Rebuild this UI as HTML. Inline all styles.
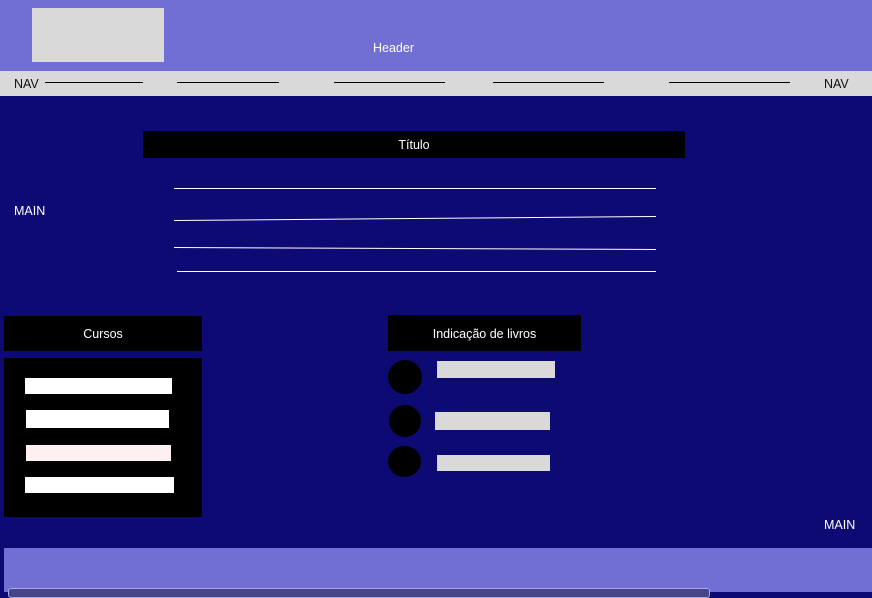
<!DOCTYPE html>
<html><head><meta charset="utf-8"><style>
*{margin:0;padding:0;box-sizing:border-box}
body{width:872px;height:592px;overflow:hidden;background:#0d0a74;font-family:"Liberation Sans",sans-serif;position:relative;font-size:12.5px}
div{position:absolute}
.w{color:#fff}
.ln{height:1px;background:#000}
.wl{height:1px;background:#fff}
.bk{background:#000;color:#fff;text-align:center}
.g{background:#d9d9d9}
.c{background:#000;border-radius:50%}
</style></head><body>
<div style="left:0;top:0;width:872px;height:71px;background:#716fd3"></div>
<div class="g" style="left:32px;top:8px;width:132px;height:54px"></div>
<div class="w" style="left:373px;top:41px">Header</div>
<div style="left:0;top:71px;width:872px;height:25px;background:#d9d9d9"></div>
<div style="left:14px;top:77px;color:#111">NAV</div>
<div style="left:824px;top:77px;color:#111">NAV</div>
<div class="ln" style="left:45px;top:82px;width:98px"></div>
<div class="ln" style="left:177px;top:82px;width:102px"></div>
<div class="ln" style="left:334px;top:82px;width:111px"></div>
<div class="ln" style="left:493px;top:82px;width:111px"></div>
<div class="ln" style="left:669px;top:82px;width:121px"></div>
<div class="bk" style="left:143px;top:131px;width:542px;height:27px;line-height:29px">Título</div>
<div class="w" style="left:14px;top:204px">MAIN</div>
<div class="wl" style="left:174px;top:188px;width:482px"></div>
<svg style="position:absolute;left:0;top:0" width="872" height="592"><line x1="174" y1="220.5" x2="656" y2="216.5" stroke="#fff" stroke-width="1"/><line x1="174" y1="247.5" x2="656" y2="249.5" stroke="#fff" stroke-width="1"/></svg>
<div class="wl" style="left:177px;top:271px;width:479px"></div>
<div class="bk" style="left:4px;top:316px;width:198px;height:35px;line-height:37px">Cursos</div>
<div style="left:4px;top:358px;width:198px;height:159px;background:#000"></div>
<div style="left:25px;top:378px;width:147px;height:16px;background:#fff"></div>
<div style="left:26px;top:410px;width:143px;height:18px;background:#fff"></div>
<div style="left:26px;top:445px;width:145px;height:16px;background:#fdf0f0"></div>
<div style="left:25px;top:477px;width:149px;height:16px;background:#fff"></div>
<div class="bk" style="left:388px;top:315px;width:193px;height:36px;line-height:38px">Indicação de livros</div>
<div class="c" style="left:388px;top:360px;width:34px;height:34px"></div>
<div class="c" style="left:389px;top:405px;width:32px;height:32px"></div>
<div class="c" style="left:388px;top:446px;width:33px;height:31px"></div>
<div class="g" style="left:437px;top:361px;width:118px;height:17px"></div>
<div class="g" style="left:435px;top:412px;width:115px;height:18px"></div>
<div class="g" style="left:437px;top:455px;width:113px;height:16px"></div>
<div class="w" style="left:824px;top:518px">MAIN</div>
<div style="left:4px;top:548px;width:868px;height:44px;background:#716fd3"></div>
<div style="left:8px;top:588px;width:702px;height:10px;background:#48448a;border:1px solid #a9a7e6;border-radius:3px"></div>
</body></html>
